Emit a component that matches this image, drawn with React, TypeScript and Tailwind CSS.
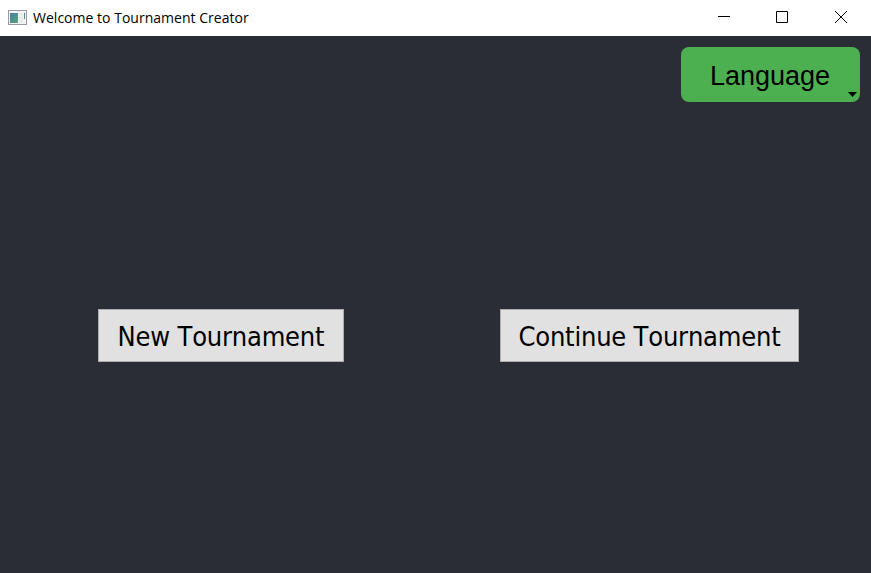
export default function App() {
  return (
    <div className="flex h-[573px] w-[871px] flex-col overflow-hidden bg-[#2a2d35] text-black">
      <header className="flex h-9 shrink-0 items-center bg-white">
        <svg className="ml-2 shrink-0" width="20" height="16" viewBox="0 0 20 16" shapeRendering="crispEdges">
          <defs>
            <linearGradient id="pane" x1="0" y1="0" x2="1" y2="1">
              <stop offset="0" stopColor="#467f9f" />
              <stop offset="1" stopColor="#59a477" />
            </linearGradient>
          </defs>
          <rect x="0.5" y="0.5" width="18" height="14" fill="#f4f4f4" stroke="#9a9aa2" />
          <rect x="2" y="3" width="8" height="10" fill="url(#pane)" />
          <rect x="11" y="3" width="4" height="10" fill="#e9ebe9" />
          <rect x="16" y="3" width="1" height="6" fill="url(#pane)" />
        </svg>
        <span className="ml-[5px] whitespace-nowrap font-['Open_Sans',sans-serif] text-[14px] leading-5 tracking-[0.02px]">
          Welcome to Tournament Creator
        </span>
        <div className="ml-auto flex">
          <svg width="174" height="36" viewBox="0 0 174 36" fill="none" stroke="#000">
            <path d="M21 16.5h12M79.5 11.5h11v11h-11zM138 11l12 12M150 11l-12 12" />
          </svg>
        </div>
      </header>
      <main className="flex flex-1 flex-col">
        <div className="flex justify-end pr-[11px] pt-[11px]">
          <button className="relative h-[55px] w-[179px] rounded-lg bg-[#4caf50] pr-px pt-[3px] font-['Liberation_Sans',sans-serif] text-[27px]">
            Language
            <svg className="absolute bottom-[5px] right-[3px]" width="9" height="5" viewBox="0 0 9 5"><path d="M0 0h9L4.5 5z" /></svg>
          </button>
        </div>
        <div className="mt-[207px] flex gap-[156px] pl-[98px] font-['DejaVu_Sans_Condensed','DejaVu_Sans',sans-serif] text-[27px] tracking-[-0.2px] [font-kerning:none] [font-stretch:condensed]">
          <button className="h-[53px] w-[246px] whitespace-nowrap border border-[#adadad] bg-[#e1e1e1] pt-[3px]">
            New Tournament
          </button>
          <button className="h-[53px] w-[299px] whitespace-nowrap border border-[#adadad] bg-[#e1e1e1] pt-[3px]">
            Continue Tournament
          </button>
        </div>
      </main>
    </div>
  );
}
